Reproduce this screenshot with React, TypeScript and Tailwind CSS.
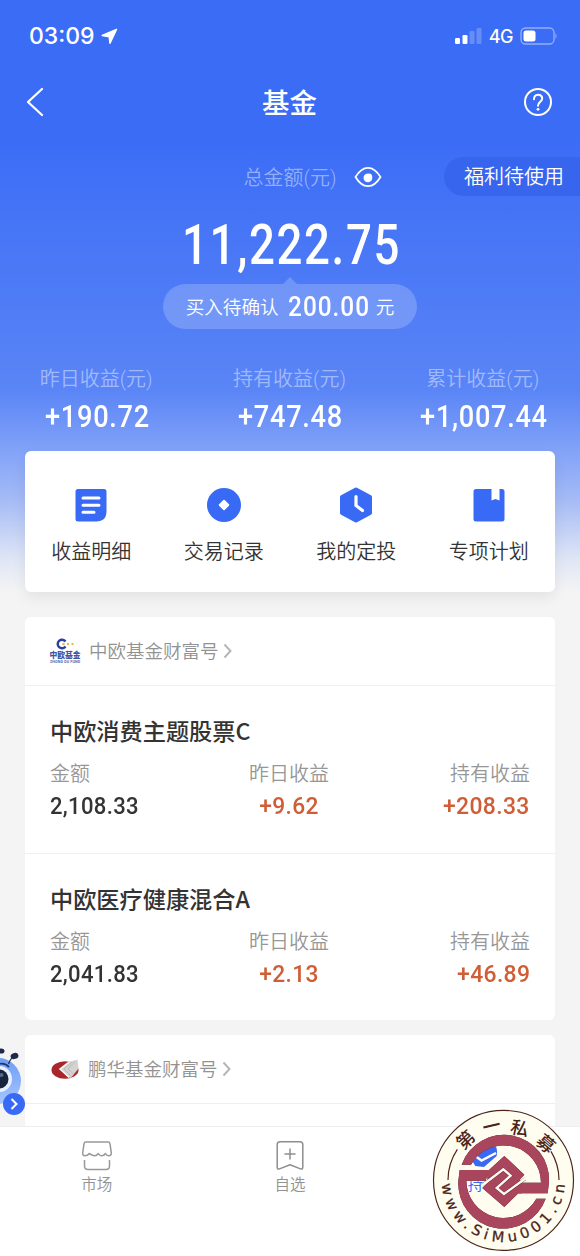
import clsx from 'clsx';
import type { ReactNode } from 'react';

type Fund = { name: string; amount: string; yesterday: string; held: string };

const stats = [
    { label: '昨日收益(元)', value: '+190.72' },
    { label: '持有收益(元)', value: '+747.48' },
    { label: '累计收益(元)', value: '+1,007.44' },
];

const funds: Fund[] = [
    { name: '中欧消费主题股票C', amount: '2,108.33', yesterday: '+9.62', held: '+208.33' },
    { name: '中欧医疗健康混合A', amount: '2,041.83', yesterday: '+2.13', held: '+46.89' },
];

const shortcuts = [
    { label: '收益明细', icon: <DetailIcon /> },
    { label: '交易记录', icon: <RecordIcon /> },
    { label: '我的定投', icon: <PlanIcon /> },
    { label: '专项计划', icon: <BookIcon /> },
];

function DetailIcon() {
    return (
        <svg width="36" height="36" viewBox="0 0 36 36">
            <path d="M5 2h26q2.500 0 2.500 2.500V24q0 10.500-10.500 10.500H5Q2.500 34.500 2.500 32V4.500Q2.500 2 5 2Z" fill="#386af5" />
            <path d="M10 11h16M10 18.200h16M10 25.200h11" stroke="#fff" strokeWidth="3" strokeLinecap="round" />
        </svg>
    );
}

function RecordIcon() {
    return (
        <svg width="36" height="36" viewBox="0 0 36 36">
            <circle cx="18" cy="18" r="17" fill="#386af5" />
            <rect x="14" y="14" width="8" height="8" rx="1" fill="#fff" transform="rotate(45 18 18)" />
        </svg>
    );
}

function PlanIcon() {
    return (
        <svg width="36" height="36" viewBox="0 0 36 36">
            <path d="M18 2.500 32 10v16l-14 7.500L4 26V10Z" fill="#386af5" stroke="#386af5" strokeWidth="4" strokeLinejoin="round" />
            <path d="M18 9.500v9l6.500 5" fill="none" stroke="#fff" strokeWidth="3.200" strokeLinecap="round" />
        </svg>
    );
}

function BookIcon() {
    return (
        <svg width="36" height="36" viewBox="0 0 36 36">
            <path d="M5 2h15.500v11.500l4-1.500 4 1.500V2H31q2.500 0 2.500 2.500V32q0 2.500-2.500 2.500H5Q2.500 34.500 2.500 32V4.500Q2.500 2 5 2Z" fill="#386af5" />
        </svg>
    );
}

function Chevron() {
    return (
        <svg width="10" height="16" viewBox="0 0 10 16" className="ml-1">
            <path d="m1.500 1.500 6 6.500-6 6.500" fill="none" stroke="#b5b5b5" strokeWidth="1.900" />
        </svg>
    );
}

function StatusBar() {
    return (
        <div className="flex h-[72px] items-center justify-between pr-[22px] pl-[29px] font-[Inter]">
            <div className="flex items-center text-[23px] font-medium">
                03:09
                <svg width="17" height="17" viewBox="0 0 17 17" className="ml-1.5">
                    <path d="M15.500 1.500 1.200 7.500l7 1.200.8 6.500Z" fill="#fff" stroke="#fff" strokeWidth="1.500" strokeLinejoin="round" />
                </svg>
            </div>
            <div className="flex items-center">
                <svg width="28" height="18" viewBox="0 0 28 18">
                    <rect x="1" y="11" width="5" height="6" rx="1.300" fill="#fff" />
                    <rect x="8.500" y="8" width="5" height="9" rx="1.300" fill="#fff" />
                    <rect x="15.500" y="4" width="5" height="13" rx="1.300" fill="#fff" opacity=".22" />
                    <rect x="22.500" y="1" width="5" height="16" rx="1.300" fill="#fff" opacity=".22" />
                </svg>
                <span className="ml-[7px] text-[18px] font-medium tracking-tight">4G</span>
                <svg width="38" height="18" viewBox="0 0 38 18" className="ml-[7px]">
                    <rect x="1" y="1" width="33" height="16" rx="4.500" fill="none" stroke="#fff" strokeWidth="1.300" opacity=".45" />
                    <rect x="3.500" y="3.500" width="12" height="11" rx="2.500" fill="#fff" />
                    <path d="M35.500 6q2 3 0 6Z" fill="#fff" opacity=".5" />
                </svg>
            </div>
        </div>
    );
}

function NavBar() {
    return (
        <div className="grid h-[60px] grid-cols-[1fr_auto_1fr] items-center px-[25px]">
            <svg width="20" height="30" viewBox="0 0 20 30">
                <path d="M17 2 3 15l14 13" fill="none" stroke="#fff" strokeWidth="2.300" strokeLinecap="round" strokeLinejoin="round" />
            </svg>
            <h1 className="-mt-px mb-[-5px] -ml-px text-[27.500px] font-medium">基金</h1>
            <svg width="30" height="30" viewBox="0 0 30 30" className="mr-[2px] justify-self-end">
                <g fill="none" stroke="#fff" strokeWidth="2">
                    <circle cx="15" cy="15" r="13" />
                    <path d="M11 12.200C11 6.200 19.200 6.400 19.200 11.500c0 3.200-4.200 3.500-4.200 7.300" strokeLinecap="round" />
                </g>
                <circle cx="15" cy="22.300" r="1.400" fill="#fff" />
            </svg>
        </div>
    );
}

function Summary() {
    return (
        <>
            <div className="mt-6 grid h-10 grid-cols-[1fr_auto_1fr] items-center">
                <span className="col-start-2 pt-1 text-[20px] font-[350] text-white/45">总金额(元)</span>
                <div className="flex items-center justify-between">
                    <svg width="28" height="22" viewBox="0 0 28 22" className="mt-px ml-[18px]">
                        <path d="M1.500 11Q7 1.800 14 1.800T26.500 11Q21 20.200 14 20.200T1.500 11Z" fill="none" stroke="#fff" strokeWidth="1.800" />
                        <path d="M13.500 7.500Q14 9.800 16.500 9.200 18.500 9 18.300 11.500A4.400 4.400 0 1 1 13.500 7.500Z" fill="#fff" />
                        <circle cx="15" cy="10.500" r="3" fill="#fff" />
                    </svg>
                    <div className="h-[39px] w-[136px] rounded-l-full bg-[#3765ee] pl-5 text-[20px] leading-[40px] font-[350] whitespace-nowrap">福利待使用</div>
                </div>
            </div>
            <div className="mt-[19px] flex h-[60px] items-center justify-center font-[Roboto] text-[55px] font-medium">
                <span className="scale-x-[.83] pl-1 tracking-[.035em]">11,222.75</span>
            </div>
            <div className="flex h-[9px] justify-center">
                <svg width="14" height="8" viewBox="0 0 14 8" className="mt-px">
                    <path d="M0 8 7 1l7 7Z" fill="#fff" opacity=".2" />
                </svg>
            </div>
            <div className="mx-auto flex h-[45px] w-[254px] items-center justify-center rounded-full bg-white/20 text-[18.600px] font-[350]">
                <span className="pt-1">买入待确认</span>
                <span className="mx-[3px] -mr-1 scale-x-[.87] pt-px font-[Roboto] text-[28px] font-medium tracking-[.04em]">200.00</span>
                <span className="ml-1 pt-1">元</span>
            </div>
            <div className="mt-[33px] grid grid-cols-3 text-center">
                {stats.map((s) => (
                    <div key={s.label} className="pr-px">
                        <div className="h-[33px] text-[20px] leading-[34px] font-[350] text-white/45">{s.label}</div>
                        <div className="flex h-[41px] items-center justify-center font-[Roboto] text-[32px] font-medium">
                            <span className="scale-x-[.85] pl-0.5 tracking-[.025em]">{s.value}</span>
                        </div>
                    </div>
                ))}
            </div>
        </>
    );
}

type CellProps = { label: string; value: string; className?: string; valueClassName?: string };

function Cell({ label, value, className, valueClassName }: CellProps) {
    return (
        <div className={className}>
            <div className="text-[20px] leading-[32px] font-[350] text-[#979797]">{label}</div>
            <div className="font-[Roboto] text-[24.500px] leading-[32px] font-medium">
                <span className={clsx('inline-block tracking-[.015em]', valueClassName)}>{value}</span>
            </div>
        </div>
    );
}

function FundRow({ fund }: { fund: Fund }) {
    return (
        <div className="h-[167.500px] border-t border-[#f0f0f0] px-[25px] pt-[26px]">
            <h2 className="font-['Noto_Sans_CJK_SC',sans-serif] text-[23.200px] leading-[37px] font-medium">{fund.name}</h2>
            <div className="mt-[9px] grid grid-cols-3">
                <Cell label="金额" value={fund.amount} valueClassName="origin-left scale-x-[.9]" />
                <Cell label="昨日收益" value={fund.yesterday} className="pr-0.5 text-center" valueClassName="scale-x-[.93] text-[#cf5d35]" />
                <Cell label="持有收益" value={fund.held} className="text-right" valueClassName="origin-right scale-x-[.935] text-[#cf5d35]" />
            </div>
        </div>
    );
}

function CompanyHeader({ logo, name }: { logo: ReactNode; name: string }) {
    return (
        <div className="flex h-[68px] items-center pl-6 text-[18.500px] font-[350] text-[#929292]">
            {logo}
            <span className="pt-[3px]">{name}</span>
            <Chevron />
        </div>
    );
}

function ZhongOuLogo() {
    return (
        <svg width="32" height="26" viewBox="0 0 32 26" className="mr-2">
            <path d="M16.500 3.500A4.300 4.300 0 1 0 16.500 8.500" fill="none" stroke="#2b3f9e" strokeWidth="2.400" />
            <circle cx="14.500" cy="6" r="1.300" fill="#e3bd4e" />
            <circle cx="19" cy="6" r="1.200" fill="#e3bd4e" />
            <circle cx="23.500" cy="6" r="1.200" fill="#e3bd4e" />
            <text x="16" y="20" textAnchor="middle" fontSize="7.800" fontWeight="900" fill="#3a56a6">中欧基金</text>
            <text x="16" y="24.500" textAnchor="middle" fontSize="3.600" fontWeight="700" fill="#4a5fae" textLength="30">ZHONG OU FUND</text>
        </svg>
    );
}

function PengHuaLogo() {
    return (
        <svg width="29" height="22" viewBox="0 0 29 22" className="mr-2 ml-[2px]">
            <ellipse cx="14" cy="12" rx="13.500" ry="8.800" fill="#a9272b" />
            <path d="m8 11 8-6.500 10.500-3 1 9-8 10Z" fill="#d5d3d2" />
            <path d="m18 4.500-9 6.500 9 8.500" fill="none" stroke="#fff" strokeWidth="1.200" />
            <path d="m21 4-8 7 8 8M24 3.500l-7 7.500 6 5.500" fill="none" stroke="#b5b5b5" strokeWidth=".8" />
        </svg>
    );
}

function Mascot() {
    return (
        <svg width="26" height="72" viewBox="0 0 26 72" className="absolute top-[1046px] left-0">
            <defs>
                <linearGradient id="skin" x1="0" y1="0" x2="0" y2="1">
                    <stop offset="0" stopColor="#6e9cf5" />
                    <stop offset="1" stopColor="#a6c6ff" />
                </linearGradient>
            </defs>
            <circle cx="-2" cy="35" r="23" fill="url(#skin)" />
            <path d="M8.500 18q1.500-5 5-7" fill="none" stroke="#26345a" strokeWidth="1.300" />
            <ellipse cx="14.500" cy="10" rx="4" ry="3" fill="#20294a" transform="rotate(-20 14.500 10)" />
            <ellipse cx="1" cy="5" rx="3.500" ry="2.600" fill="#20294a" />
            <circle cx="-1" cy="33" r="13" fill="#e8f0ff" />
            <circle cx="-1" cy="33" r="9.500" fill="#18243d" />
            <circle cx="1.500" cy="29" r="2" fill="#52688e" />
            <path d="M-1 18Q5 16.500 9 21" fill="none" stroke="#1d3768" strokeWidth="1.600" />
            <circle cx="14" cy="58" r="11" fill="#386af5" />
            <path d="m11.500 53 5 5-5 5" fill="none" stroke="#fff" strokeWidth="2" />
        </svg>
    );
}

function Tab({ icon, label, active }: { icon: ReactNode; label: string; active?: boolean }) {
    return (
        <div className={clsx('flex flex-col items-center', active ? 'text-[#386af5]' : 'font-[350] text-[#929292]')}>
            {icon}
            <span className="text-[15.500px] leading-[26px]">{label}</span>
        </div>
    );
}

function TabBar() {
    return (
        <nav className="grid h-[130px] shrink-0 grid-cols-3 border-t border-[#eee] bg-white pt-[13px]">
            <Tab
                label="市场"
                icon={
                    <svg width="32" height="32" viewBox="0 0 32 32" fill="none" stroke="#999" strokeWidth="1.500" strokeLinejoin="round">
                        <path d="M5 2h22q1.800 0 2 1.800l1.300 9q.2 3-2.300 3-2.300 0-3.500-2.300-1.500 2.300-3.800 2.300-2.200 0-3.500-2.300-1.500 2.300-3.500 2.300T8.200 13.500Q6.700 15.800 4 15.800q-2.600 0-2.300-3l1.300-9Q3.200 2 5 2Z" />
                        <path d="M3.500 20v6q0 3.500 3.500 3.500h18q3.500 0 3.500-3.500v-6" />
                    </svg>
                }
            />
            <Tab
                label="自选"
                icon={
                    <svg width="32" height="32" viewBox="0 0 32 32" fill="none" stroke="#8e8e8e" strokeWidth="1.500" strokeLinejoin="round">
                        <path d="M6 1.800h20q2.800 0 2.800 2.800v22.500q0 2.500-2.300 1.800L16 24.800 5.500 28.900q-2.300.7-2.300-1.800V4.600q0-2.800 2.800-2.800Z" />
                        <path d="M16 8.500v11M10.500 14h11" />
                    </svg>
                }
            />
            <Tab
                active
                label="持有"
                icon={
                    <svg width="32" height="32" viewBox="0 0 32 32">
                        <rect x="2" y="2" width="28" height="28" rx="9" fill="#386af5" />
                        <path d="m9 16.500 5.500 4L29 13" fill="none" stroke="#fff" strokeWidth="2.500" />
                    </svg>
                }
            />
        </nav>
    );
}

function Seal() {
    return (
        <svg width="160" height="160" viewBox="0 0 480 480" className="absolute top-[1096px] left-[420px]">
            {/* disc, with two openings that let the tab below show through */}
            <path
                fillRule="evenodd"
                fill="#fffdf0"
                d="M40 253a210.500 210.500 0 1 0 421 0a210.500 210.500 0 1 0-421 0ZM158 197 187 160 215 148 234 152 230 180 192 213 166 210ZM143 256H188V288H143Z"
            />
            <circle cx="250.500" cy="253" r="210" fill="none" stroke="#4a2418" strokeWidth="3.500" />
            <path d="M84 252A167 167 0 0 1 112 160M417 252A167 167 0 0 0 393 166" fill="none" stroke="#4a2418" strokeWidth="3.500" />
            <g fill="#a9465d" className="drop-shadow-[0_0_2px_#4a1020]">
                <path id="half" d="M125 206A135 135 0 0 1 387 258L383 292H295L305 260H363A112 112 0 0 0 153 206Z" />
                <use href="#half" transform="rotate(180 251 257)" />
                <path d="M253 180 313 236 300 250 305 292H295L253 333 187 276 204 260 200 222H207Z" />
            </g>
            <path d="M186 268 250 220 272 239 230 276 252 294 316 248" fill="none" stroke="#4a1020" strokeWidth="10" opacity=".5" />
            <path d="M184 270 250 220 272 239 230 276 252 294 318 246" fill="none" stroke="#fffdf0" strokeWidth="7" />
            <g fontSize="54" fontWeight="500" textAnchor="middle" fill="#4a2418">
                <text transform="translate(137 132) rotate(-43)" y="19">第</text>
                <text transform="translate(215 91) rotate(-13)" y="19">一</text>
                <text transform="translate(299 97) rotate(12)" y="19">私</text>
                <text transform="translate(377 144) rotate(40)" y="19">募</text>
            </g>
            <path id="rim" d="M65 253A185 185 0 0 0 435 253" fill="none" />
            <text fontSize="44" fill="#4a2418" stroke="#4a2418" strokeWidth=".8" className="font-['DejaVu_Sans']">
                <textPath href="#rim" startOffset="12" textLength="556">www.SiMu001.cn</textPath>
            </text>
        </svg>
    );
}

export default function App() {
    return (
        <div className="relative flex h-[1256px] w-[580px] flex-col overflow-hidden bg-[#f4f4f4] font-[Roboto,'Noto_Sans_CJK_SC',sans-serif] text-[#333]">
            <div className="min-h-0 flex-1 overflow-hidden bg-[linear-gradient(#3b6cf6_0,#3b6cf6_135px,#5a85f6_390px,#7b9df8_440px,#a5bbf6_500px,#e0e6f5_560px,#f4f4f4_592px)]">
                <header className="h-[451px] text-white">
                    <StatusBar />
                    <NavBar />
                    <Summary />
                </header>
                <main className="px-[25px]">
                    <section className="grid h-[141px] grid-cols-4 rounded-md bg-white pt-9 shadow-[0_6px_14px_rgba(0,0,0,0.07)]">
                        {shortcuts.map((s) => (
                            <div key={s.label} className="flex flex-col items-center text-[20px] leading-[32px] font-[350]">
                                {s.icon}
                                <span className="mt-[13px]">{s.label}</span>
                            </div>
                        ))}
                    </section>
                    <section className="mt-[25px] rounded-md bg-white">
                        <CompanyHeader logo={<ZhongOuLogo />} name="中欧基金财富号" />
                        {funds.map((fund) => (
                            <FundRow key={fund.name} fund={fund} />
                        ))}
                    </section>
                    <section className="mt-[15px] rounded-t-md bg-white">
                        <CompanyHeader logo={<PengHuaLogo />} name="鹏华基金财富号" />
                        <div className="h-16 border-t border-[#eee]" />
                    </section>
                </main>
            </div>
            <TabBar />
            <Mascot />
            <Seal />
        </div>
    );
}
